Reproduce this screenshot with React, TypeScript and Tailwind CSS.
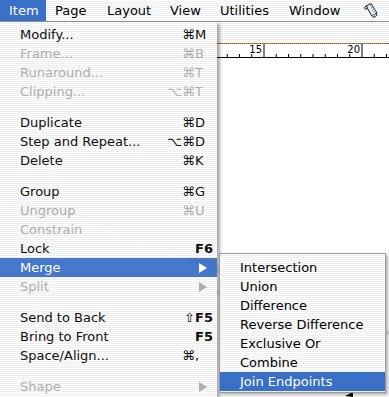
import React from 'react';

type Item =
  | { sep: true }
  | {
      label: string;
      mods?: string;
      keyName?: string;
      fkey?: boolean;
      disabled?: boolean;
      sub?: boolean;
      active?: boolean;
    };

const items: Item[] = [
  { label: 'Modify...', mods: '⌘', keyName: 'M' },
  { label: 'Frame...', mods: '⌘', keyName: 'B', disabled: true },
  { label: 'Runaround...', mods: '⌘', keyName: 'T', disabled: true },
  { label: 'Clipping...', mods: '⌥⌘', keyName: 'T', disabled: true },
  { sep: true },
  { label: 'Duplicate', mods: '⌘', keyName: 'D' },
  { label: 'Step and Repeat...', mods: '⌥⌘', keyName: 'D' },
  { label: 'Delete', mods: '⌘', keyName: 'K' },
  { sep: true },
  { label: 'Group', mods: '⌘', keyName: 'G' },
  { label: 'Ungroup', mods: '⌘', keyName: 'U', disabled: true },
  { label: 'Constrain', disabled: true },
  { label: 'Lock', keyName: 'F6', fkey: true },
  { label: 'Merge', sub: true, active: true },
  { label: 'Split', sub: true, disabled: true },
  { sep: true },
  { label: 'Send to Back', mods: '⇧', keyName: 'F5', fkey: true },
  { label: 'Bring to Front', keyName: 'F5', fkey: true },
  { label: 'Space/Align...', mods: '⌘', keyName: ',' },
  { sep: true },
  { label: 'Shape', sub: true, disabled: true },
];

const mergeItems = ['Intersection', 'Union', 'Difference', 'Reverse Difference', 'Exclusive Or', 'Combine', 'Join Endpoints'];

const menuBar = [
  { label: 'Item', w: 'w-[46px]', on: true },
  { label: 'Page', w: 'w-[52px]' },
  { label: 'Layout', w: 'w-[63px]' },
  { label: 'View', w: 'w-[50px]' },
  { label: 'Utilities', w: 'w-[69px]' },
  { label: 'Window', w: 'w-[74px]' },
];

const stripes = 'bg-[repeating-linear-gradient(to_bottom,#ffffff_0px,#ffffff_1px,#eeeeee_1px,#eeeeee_2px)]';

function Arrow({ color }: { color: string }) {
  return (
    <svg width="8" height="10" viewBox="0 0 8 10">
      <path d="M0 0 L8 5 L0 10 Z" fill={color} />
    </svg>
  );
}

// AppleScript menu: a rolled scroll lying on the diagonal
function ScriptIcon() {
  return (
    <svg width="16" height="16" viewBox="0 0 16 16">
      <path d="M3 4 L8 1.5 L14 11 L9 14 Z" fill="#e4ebf3" stroke="#1c1c1c" strokeWidth="1" strokeLinejoin="round" />
      <path d="M7 4 L10 2.7 M8 6 L11.2 4.6 M9 8 L12.3 6.6 M10 10 L13 8.8" stroke="#8797ab" strokeWidth="0.9" />
      <path d="M3 4 C1 5 1.5 8 3.5 7 C5 6.3 4.5 4.2 3 4 Z" fill="#c7d2de" stroke="#1c1c1c" strokeWidth="1" />
      <path d="M9 14 C10.5 15.8 13.5 15 13.8 13 C14 11.6 12.6 11.2 12 12.3" fill="#c7d2de" stroke="#1c1c1c" strokeWidth="1" />
    </svg>
  );
}

function Ruler() {
  const ticks = [];
  for (let i = -3; i < 14; i++) {
    const x = 42 + i * 12.25;
    if (x < 0 || x > 167) continue;
    const major = i % 8 === 0;
    ticks.push(<line key={i} x1={x} x2={x} y1={major ? 0 : 10} y2={14} stroke="#000" strokeWidth="1" />);
  }
  return (
    <svg width="167" height="14" viewBox="0 0 167 14" className="block">
      {ticks}
      <text x="40" y="9" textAnchor="end" fontSize="10" fontFamily="DejaVu Sans, sans-serif" fill="#000">15</text>
      <text x="138" y="9" textAnchor="end" fontSize="10" fontFamily="DejaVu Sans, sans-serif" fill="#000">20</text>
    </svg>
  );
}

export default function App() {
  return (
    <div className="relative w-[389px] h-[397px] overflow-hidden bg-white font-['DejaVu_Sans',sans-serif] text-[13px] text-black select-none">
      {/* menu bar */}
      <div className={`flex h-[22px] border-b border-[#8c8c8c] ${stripes}`}>
        {menuBar.map((m) => (
          <div key={m.label} className={`${m.w} pl-[9px] leading-[21px] ${m.on ? 'bg-[#3a6fc8] text-white' : ''}`}>
            {m.label}
          </div>
        ))}
        <div className="pl-[9px] pt-[2px]">
          <ScriptIcon />
        </div>
      </div>

      {/* document window behind */}
      <div className="flex flex-col">
        <div className={`h-[21px] ${stripes}`} />
        <div className="h-[1px] bg-[repeating-linear-gradient(to_right,#7a5a3a_0px,#7a5a3a_1px,#c08a50_1px,#c08a50_2px)]" />
        <div className="flex h-[14px] border-b border-black bg-white">
          <div className="w-[222px]" />
          <Ruler />
        </div>
        <div className="relative h-[339px] bg-white">
          <svg width="389" height="339" className="absolute left-0 top-0">
            <path d="M0 140 C60 150 150 180 250 225" fill="none" stroke="#d6e4f2" strokeWidth="7" />
            <path d="M130 240 L215 300 M150 300 L215 255" stroke="#d8d8d8" strokeWidth="1" />
            <path d="M200 230 L389 275" stroke="#e2e2e2" strokeWidth="4" />
            <path d="M345 338 L353 334 L353 339" fill="#000" />
          </svg>
        </div>
      </div>

      {/* Item menu */}
      <div className={`absolute left-0 top-[22px] w-[217px] pt-[3px] pb-[2px] ${stripes} opacity-[0.94] shadow-[3px_2px_3px_rgba(0,0,0,0.35)]`}>
        {items.map((it, i) => {
          if ('sep' in it) return <div key={i} className="h-[12px]" />;
          const color = it.active ? 'text-white' : it.disabled ? 'text-[#a9a9a9]' : 'text-black';
          return (
            <div key={i} className={`flex h-[19px] items-center pl-[20px] pr-[6px] leading-[19px] ${color} ${it.active ? 'bg-[#3a6fc8]' : ''}`}>
              <span className="flex-1">{it.label}</span>
              {it.sub ? (
                <span className="w-[16px] flex justify-end pr-[4px]">
                  <Arrow color={it.active ? '#ffffff' : it.disabled ? '#a9a9a9' : '#000000'} />
                </span>
              ) : (
                <>
                  <span className="text-right">{it.mods}</span>
                  <span className={`w-[16px] ${it.fkey ? 'font-bold' : ''}`}>{it.keyName}</span>
                </>
              )}
            </div>
          );
        })}
      </div>

      {/* Merge submenu */}
      <div className={`absolute left-[219px] top-[253px] w-[167px] border border-[#9a9a9a] pt-[4px] pb-[1px] ${stripes} shadow-[2px_2px_3px_rgba(0,0,0,0.3)]`}>
        {mergeItems.map((m, i) => (
          <div key={m} className={`h-[19px] pl-[20px] leading-[19px] ${i === mergeItems.length - 1 ? 'bg-[#3a6fc8] text-white' : 'text-black'}`}>
            {m}
          </div>
        ))}
      </div>
    </div>
  );
}
